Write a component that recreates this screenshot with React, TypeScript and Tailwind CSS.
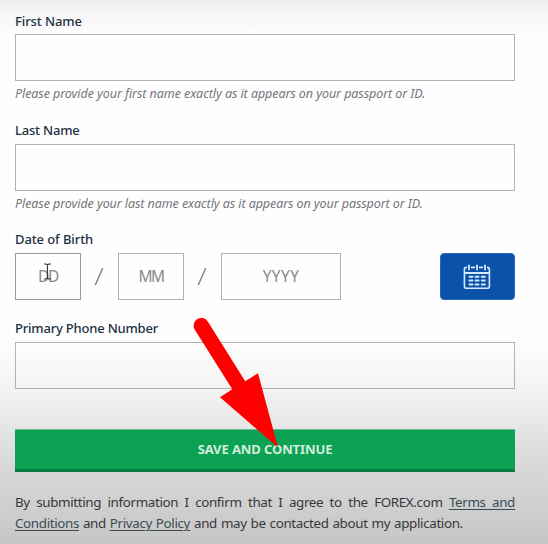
import React from "react";

const label = "h-[18px] whitespace-nowrap text-[13px] leading-[18px] font-medium text-[#22303f]";
const box = "h-[47px] w-full border border-[#b2b2b2] bg-transparent";
const hint = "h-[18px] whitespace-nowrap text-[12.5px] leading-[18px] italic text-[#77747a]";
const link = "text-[#394c54] underline decoration-1 underline-offset-2";

function CalendarIcon() {
  return (
    <svg className="mr-[2px]" width="28" height="26" viewBox="0 0 28 26" fill="none" stroke="#d5e9ff" strokeLinecap="round">
      <rect x="1.4" y="3.4" width="25" height="20.8" rx="2" strokeWidth="1.6" />
      <path d="M2 9H26" strokeWidth="1.8" />
      <path d="M6 1V6M14 1V6M22 1V6" stroke="#0c52aa" strokeWidth="4" />
      <path d="M6 1.3V5.6M14 1.3V5.6M22 1.3V5.6" strokeWidth="1.8" />
      <path
        d="M6.5 12.8H9.5M12.5 12.8H15.5M18.8 12.8H21.8M6.5 16.6H9.5M12.5 16.6H15.5M18.8 16.6H21.8M6.5 20.4H9.5M12.5 20.4H15.5M18.8 20.4H21.8"
        strokeWidth="2"
      />
    </svg>
  );
}

function Slash() {
  return (
    <svg className="mr-[2px]" width="10" height="20" viewBox="0 0 10 20">
      <path d="M1.3 18L8.7 1" stroke="#858187" strokeWidth="1.5" />
    </svg>
  );
}

export default function App() {
  return (
    <div className="relative h-[544px] w-[548px] overflow-hidden bg-[linear-gradient(to_bottom,#ededed_0px,#f7f7f7_16px,#fefefe_35px,#fefefe_340px,#f3f3f3_388px,#e5e5e5_428px,#d7d7d7_472px,#cccccc_520px,#c6c6c6_544px)] pr-[33px] pl-[15px] pt-[12px] font-['Noto_Sans','Open_Sans',sans-serif]">
      <div className={label}><span className="tracking-[-0.1px]">First Name</span></div>
      <div className={box + " mt-[4px]"} />
      <div className={hint + " mt-[4px]"}><span className="tracking-[-0.07px]">Please provide your first name exactly as it appears on your passport or ID.</span></div>

      <div className={label + " mt-[18px]"}><span className="tracking-[-0.2px]">Last Name</span></div>
      <div className={box + " mt-[5px]"} />
      <div className={hint + " mt-[4px]"}><span className="tracking-[-0.08px]">Please provide your last name exactly as it appears on your passport or ID.</span></div>

      <div className={label + " mt-[17px]"}><span className="tracking-[-0.1px]">Date of Birth</span></div>
      <div className="mt-[5px] flex h-[47px] text-[15.5px] leading-[44px] text-[#8b878b]">
        <div className="relative w-[66px] border border-[#999] text-center">
          <span className="tracking-[-1.2px]">DD</span>
          <svg className="absolute left-[27px] top-[9px]" width="9" height="17" viewBox="0 0 9 17" fill="none" stroke="#333" strokeWidth="1.1">
            <path d="M1 1H3.2L4.5 2L5.8 1H8M4.5 2V15M1 16H3.2L4.5 15L5.8 16H8" />
          </svg>
        </div>
        <div className="flex w-[37px] items-center justify-center"><Slash /></div>
        <div className="w-[66px] border border-[#b2b2b2] text-center"><span className="tracking-[-1.5px]">MM</span></div>
        <div className="flex w-[37px] items-center justify-center"><Slash /></div>
        <div className="w-[120px] border border-[#b2b2b2] text-center"><span className="tracking-[0.4px]">YYYY</span></div>
        <div className="ml-auto flex w-[75px] items-center justify-center rounded-[4px] border border-[#2969b7] bg-[#0c52aa]"><CalendarIcon /></div>
      </div>

      <div className={label + " mt-[19px]"}><span className="tracking-[-0.2px]">Primary Phone Number</span></div>
      <div className={box + " mt-[5px]"} />

      <div className="mt-[40px] h-[43px] border-t border-b-[3px] border-t-[#65be8b] border-b-[#087b42] bg-[#0ba253] text-center text-[13px] leading-[38px] font-bold text-[#d3eddc]"><span className="tracking-[-0.1px]">SAVE AND CONTINUE</span></div>

      <div className="mt-[20px] text-[13.4px] leading-[21px] tracking-[-0.36px] whitespace-nowrap text-[#37373b]">
        <div className="[text-align-last:justify]">By submitting information I confirm that I agree to the FOREX.com <span className={link}>Terms and</span></div>
        <div className="[word-spacing:0.8px]"><span className={link}>Conditions</span> and <span className={link}>Privacy Policy</span> and may be contacted about my application.</div>
      </div>

      <svg className="absolute left-0 top-0" width="548" height="544" viewBox="0 0 548 544" fill="#ff0000">
        <path d="M194.8 329.7A7.6 7.6 0 0 1 207.8 321.5L245.2 381.3L258 373.3L278 447.5L220 397.2L232.3 389.3Z" />
      </svg>
    </div>
  );
}
